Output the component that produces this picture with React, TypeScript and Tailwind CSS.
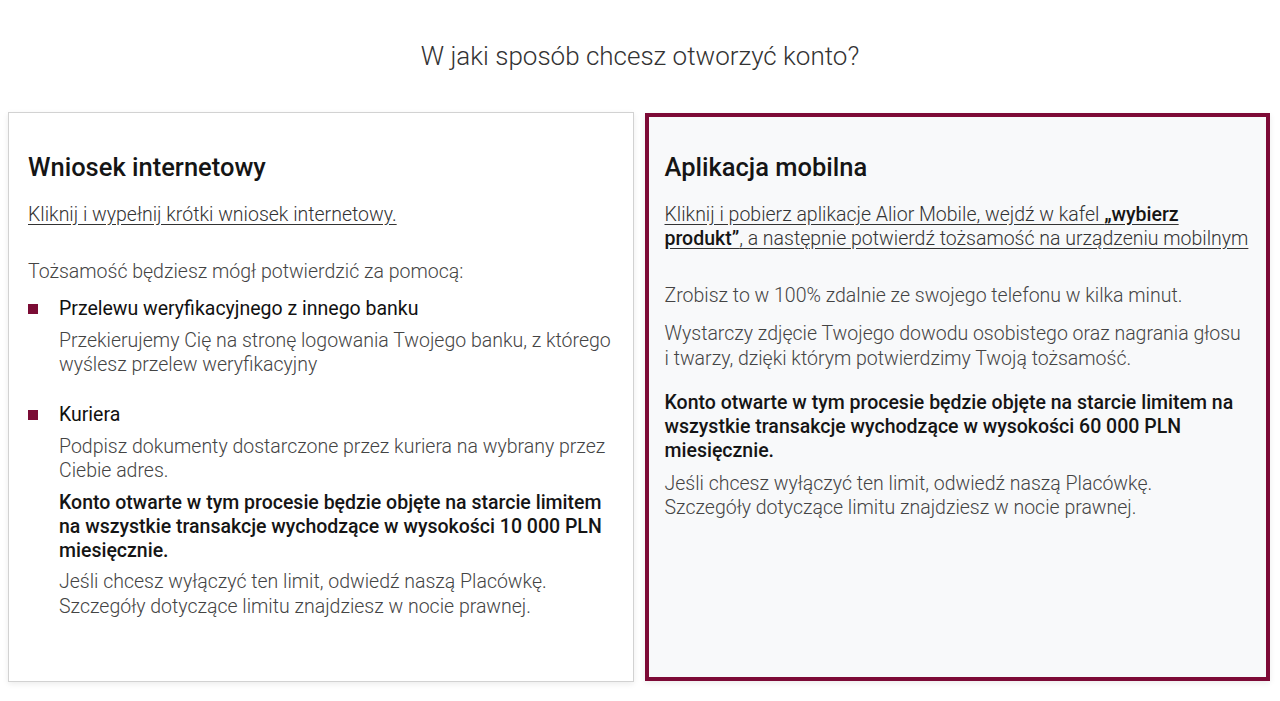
export default function App() {
  return (
    <div className="min-h-[701px] bg-white font-['Roboto',sans-serif] text-[#333]">
      <h1 className="pt-[40px] text-center text-[26px] font-light leading-[32px] text-[#333]">
        W jaki sposób chcesz otworzyć konto?
      </h1>

      <div className="mt-[40px] grid grid-cols-2 gap-[11px] pl-[8px] pr-[10px]">
        {/* Wniosek internetowy */}
        <div className="h-[570px] border border-[#d2d2d2] bg-white pl-[19px] pr-[12px] pt-[38px] shadow-[0_2px_6px_rgba(0,0,0,0.08)]">
          <h2 className="text-[25.5px] font-medium leading-[32px] text-[#151515]">Wniosek internetowy</h2>
          <a href="#" className="mt-[20px] block text-[19.5px] font-light leading-[24px] text-[#333] underline underline-offset-[3px]">
            Kliknij i wypełnij krótki wniosek internetowy.
          </a>
          <p className="mt-[33px] text-[19.5px] font-light leading-[24px] text-[#444]">
            Tożsamość będziesz mógł potwierdzić za pomocą:
          </p>
          <ul className="mt-[13px]">
            <li className="flex">
              <span className="mt-[7px] h-[10px] w-[10px] shrink-0 bg-[#7b0c35]" />
              <div className="ml-[21px]">
                <div className="text-[19.5px] font-normal leading-[24px] text-[#111]">
                  Przelewu weryfikacyjnego z innego banku
                </div>
                <p className="mt-[8px] text-[19.5px] font-light leading-[24px] text-[#444]">
                  Przekierujemy Cię na stronę logowania Twojego banku, z którego wyślesz przelew weryfikacyjny
                </p>
              </div>
            </li>
            <li className="mt-[26px] flex">
              <span className="mt-[7px] h-[10px] w-[10px] shrink-0 bg-[#7b0c35]" />
              <div className="ml-[21px]">
                <div className="text-[19.5px] font-normal leading-[24px] text-[#111]">Kuriera</div>
                <p className="mt-[8px] text-[19.5px] font-light leading-[24px] text-[#444]">
                  Podpisz dokumenty dostarczone przez kuriera na wybrany przez Ciebie adres.
                </p>
                <p className="mt-[8px] text-[19.5px] font-medium leading-[24px] text-[#151515]">
                  Konto otwarte w tym procesie będzie objęte na starcie limitem na wszystkie transakcje wychodzące w
                  wysokości 10 000 PLN miesięcznie.
                </p>
                <p className="mt-[6px] text-[19.5px] font-light leading-[25px] text-[#444]">
                  Jeśli chcesz wyłączyć ten limit, odwiedź naszą Placówkę.
                  <br />
                  Szczegóły dotyczące limitu znajdziesz w nocie prawnej.
                </p>
              </div>
            </li>
          </ul>
        </div>

        {/* Aplikacja mobilna */}
        <div className="mt-[1px] h-[568px] border-4 border-[#7d0a36] bg-[#f8f9fa] pl-[16px] pr-[17px] pt-[34px] shadow-[0_2px_6px_rgba(0,0,0,0.08)]">
          <h2 className="text-[25.5px] font-medium leading-[32px] text-[#151515]">Aplikacja mobilna</h2>
          <a href="#" className="mt-[20px] block text-[19.5px] font-light leading-[24px] text-[#333] underline underline-offset-[3px]">
            Kliknij i pobierz aplikacje Alior Mobile, wejdź w kafel <span className="font-medium text-[#151515]">„wybierz produkt”</span>, a następnie potwierdź tożsamość na urządzeniu mobilnym
          </a>
          <p className="mt-[33px] text-[19.5px] font-light leading-[24px] text-[#444]">
            Zrobisz to w 100% zdalnie ze swojego telefonu w kilka minut.
          </p>
          <p className="mt-[13px] text-[19.5px] font-light leading-[25px] text-[#444]">
            Wystarczy zdjęcie Twojego dowodu osobistego oraz nagrania głosu
            <br />
            i twarzy, dzięki którym potwierdzimy Twoją tożsamość.
          </p>
          <p className="mt-[20px] text-[19.5px] font-medium leading-[24px] text-[#151515]">
            Konto otwarte w tym procesie będzie objęte na starcie limitem na wszystkie transakcje wychodzące w wysokości
            60 000 PLN miesięcznie.
          </p>
          <p className="mt-[9px] text-[19.5px] font-light leading-[24px] text-[#444]">
            Jeśli chcesz wyłączyć ten limit, odwiedź naszą Placówkę.
            <br />
            Szczegóły dotyczące limitu znajdziesz w nocie prawnej.
          </p>
        </div>
      </div>
    </div>
  )
}
